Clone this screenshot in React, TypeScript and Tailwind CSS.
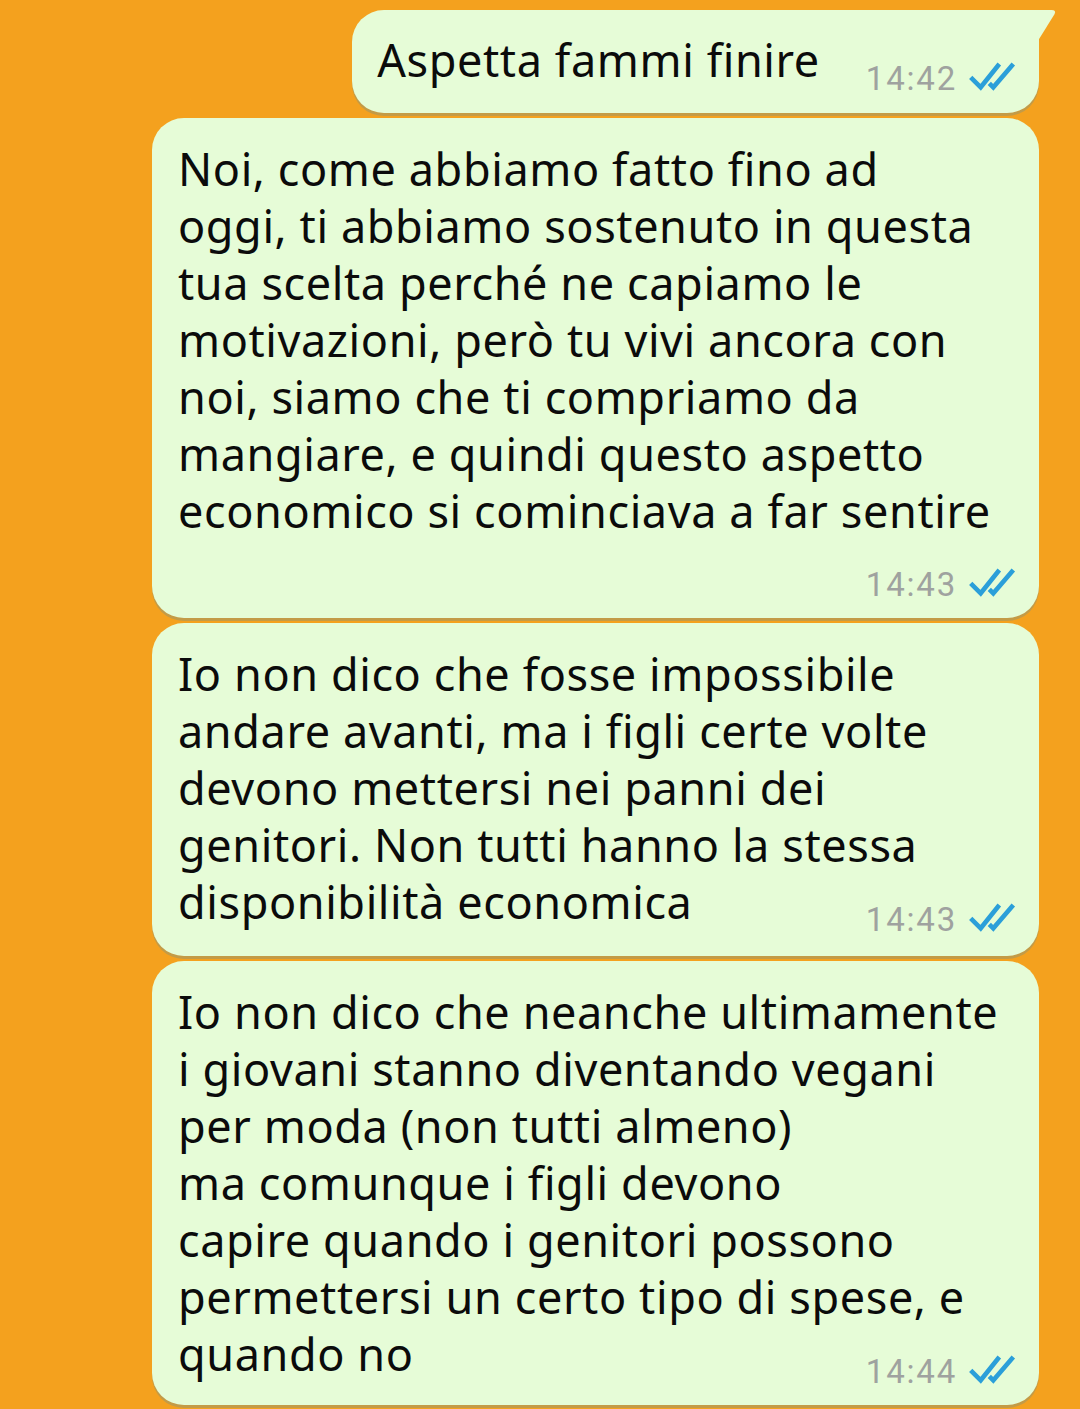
import React from "react";

function Checks() {
  return (
    <svg width="48" height="30" viewBox="0 0 48 30" className="mb-[6px] ml-[11px] shrink-0">
      <path d="M2.7 16.3 L12.7 26.3 L31.3 3" fill="none" stroke="#2b9fd9" strokeWidth="4.6" strokeLinejoin="miter" />
      <path d="M21.3 22.3 L25.3 26.3 L45.3 3" fill="none" stroke="#2b9fd9" strokeWidth="4.6" strokeLinejoin="miter" />
    </svg>
  );
}

function Stamp({ time, className = "" }: { time: string; className?: string }) {
  return (
    <div className={`flex items-center justify-end ${className}`}>
      <span className="font-['Roboto',sans-serif] text-[33px] leading-[40px] tracking-[1.8px] text-[#9fa29f]">{time}</span>
      <Checks />
    </div>
  );
}

function Bubble({ lines, time, className }: { lines: string[]; time: string; className: string }) {
  return (
    <div className={`flex w-[887px] flex-col rounded-[32px] bg-[#e6fcd7] pl-[26px] pr-[23px] shadow-[0_3px_0_#c39b47] ${className}`}>
      <div className="text-[45px] leading-[57px] tracking-[0.6px] text-[#0b0b0b] whitespace-nowrap">
        {lines.map((l, i) => (
          <div key={i}>{l}</div>
        ))}
      </div>
      <Stamp time={time} className="-mt-[30px]" />
    </div>
  );
}

export default function App() {
  return (
    <div className="flex h-[1409px] w-[1080px] flex-col items-end gap-[5px] overflow-hidden bg-[#f4a11e] pr-[41px] pt-[10px] font-['Noto_Sans',sans-serif]">
      <div className="relative flex items-start rounded-[32px] rounded-tr-none bg-[#e6fcd7] pb-[14px] pl-[25px] pr-[23px] pt-[21px] shadow-[0_3px_0_#c39b47]">
        <div className="text-[45px] leading-[57px] tracking-[0.6px] text-[#0b0b0b] whitespace-nowrap">Aspetta fammi finire</div>
        <Stamp time="14:42" className="ml-[46px] mt-[28px]" />
        <svg width="22" height="36" viewBox="0 0 22 36" className="absolute -right-[19px] top-0">
          <path d="M0 0 L15.5 0 Q20.5 0 18.6 4 L0 34 Z" fill="#e6fcd7" />
        </svg>
      </div>

      <div className="flex w-[887px] flex-col rounded-[32px] bg-[#e6fcd7] pb-[13px] pl-[26px] pr-[23px] pt-[22px] shadow-[0_3px_0_#c39b47]">
        <div className="text-[45px] leading-[57px] tracking-[0.6px] text-[#0b0b0b] whitespace-nowrap">
          <div>Noi, come abbiamo fatto fino ad</div>
          <div>oggi, ti abbiamo sostenuto in questa</div>
          <div>tua scelta perché ne capiamo le</div>
          <div>motivazioni, però tu vivi ancora con</div>
          <div>noi, siamo che ti compriamo da</div>
          <div>mangiare, e quindi questo aspetto</div>
          <div>economico si cominciava a far sentire</div>
        </div>
        <Stamp time="14:43" className="mt-[26px]" />
      </div>

      <Bubble
        className="pb-[16px] pt-[22px]"
        time="14:43"
        lines={[
          "Io non dico che fosse impossibile",
          "andare avanti, ma i figli certe volte",
          "devono mettersi nei panni dei",
          "genitori. Non tutti hanno la stessa",
          "disponibilità economica",
        ]}
      />

      <Bubble
        className="pb-[13px] pt-[22px]"
        time="14:44"
        lines={[
          "Io non dico che neanche ultimamente",
          "i giovani stanno diventando vegani",
          "per moda (non tutti almeno)",
          "ma comunque i figli devono",
          "capire quando i genitori possono",
          "permettersi un certo tipo di spese, e",
          "quando no",
        ]}
      />
    </div>
  );
}
